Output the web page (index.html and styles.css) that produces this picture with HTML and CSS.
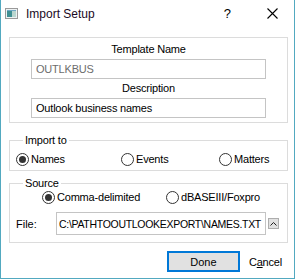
FILE: index.html
```html
<!DOCTYPE html>
<html lang="en">
<head>
    <meta charset="UTF-8">
    <title>Import Setup</title>
    <link rel="stylesheet" href="styles.css">
</head>
<body>
    <div class="window">
        <div class="titlebar">
            <svg class="appIcon" width="13" height="11" viewBox="0 0 13 11">
                <rect x="0.5" y="0.5" width="12" height="10" fill="#eef2f3" stroke="#9a9a9a" />
                <rect x="2" y="2" width="5" height="7" fill="#3f8f93" />
                <rect x="7" y="2" width="4" height="7" fill="#b9d6cf" />
                <rect x="2" y="2" width="9" height="1" fill="#6fa7c6" />
            </svg>
            <span class="title">Import Setup</span>
            <span class="helpButton">?</span>
            <svg class="closeIcon" width="11" height="11" viewBox="0 0 11 11">
                <path d="M0.5 0.5 L10.5 10.5 M10.5 0.5 L0.5 10.5" stroke="#000" stroke-width="1.1" fill="none" />
            </svg>
        </div>

        <div class="dialogBody">
            <!-- Template -->
            <div class="templateBox">
                <div class="fieldLabel">Template Name</div>
                <input type="text" class="textField readOnly" value="OUTLKBUS" readonly>
                <div class="fieldLabel secondLabel">Description</div>
                <input type="text" class="textField" value="Outlook business names">
            </div>

            <!-- Import to -->
            <fieldset class="group importGroup">
                <legend>Import to</legend>
                <div class="radioRow importRow">
                    <label class="radio checked"><span class="radioMark"></span>Names</label>
                    <label class="radio"><span class="radioMark"></span>Events</label>
                    <label class="radio"><span class="radioMark"></span>Matters</label>
                </div>
            </fieldset>

            <!-- Source -->
            <fieldset class="group sourceGroup">
                <legend>Source</legend>
                <div class="radioRow sourceRow">
                    <label class="radio checked"><span class="radioMark"></span>Comma-delimited</label>
                    <label class="radio"><span class="radioMark"></span>dBASEIII/Foxpro</label>
                </div>
                <div class="fileRow">
                    <span class="fileLabel">File:</span>
                    <input type="text" class="textField fileField" value="C:\PATHTOOUTLOOKEXPORT\NAMES.TXT">
                    <span class="browseButton">
                        <svg width="7" height="4" viewBox="0 0 7 4">
                            <path d="M0.5 3.5 L3.5 0.5 L6.5 3.5" stroke="#222" stroke-width="1" fill="none" />
                        </svg>
                    </span>
                </div>
            </fieldset>

            <div class="buttonRow">
                <button class="doneButton">Done</button>
                <span class="cancelButton">C<span class="accessKey">a</span>ncel</span>
            </div>
        </div>
    </div>
</body>
</html>
```

FILE: styles.css
```css
* {
    box-sizing: border-box;
}

body {
    margin: 0;
    font-family: 'Liberation Sans', Arial, sans-serif;
    font-size: 11px;
    color: #000;
    background-color: #fff;
}

.window {
    width: 295px;
    height: 279px;
    background-color: #fff;
    border: 1px solid #52a9c0;
    border-top: none;
}

.titlebar {
    height: 27px;
    display: flex;
    align-items: center;
    padding-left: 4px;
}

.appIcon {
    margin-right: 8px;
}

.title {
    font-size: 12px;
    color: #1a0a24;
    flex: 1;
}

.helpButton {
    font-size: 13px;
    margin-right: 36px;
}

.closeIcon {
    margin-right: 16px;
}

.dialogBody {
    padding: 10px 6px 0 8px;
}

.templateBox {
    border: 1px solid #dcdcdc;
    padding: 4px 0;
    display: flex;
    flex-direction: column;
    align-items: center;
}

.fieldLabel {
    height: 14px;
    line-height: 14px;
    letter-spacing: -0.2px;
    margin-bottom: 3px;
}

.secondLabel {
    margin-top: 2px;
}

.textField {
    display: block;
    width: 235px;
    height: 20px;
    margin: 0;
    padding: 0 4px;
    border: 1px solid #c4c4c4;
    border-radius: 0;
    background-color: #fff;
    font-family: 'Liberation Sans', Arial, sans-serif;
    font-size: 11px;
    letter-spacing: -0.2px;
    color: #000;
    outline: none;
}

.readOnly {
    color: #6d6d6d;
}

.group {
    margin: 10px 0 0;
    padding: 5px 0 4px 6px;
    border: 1px solid #dcdcdc;
    min-width: 0;
}

.group legend {
    margin-left: 7px;
    padding: 0 2px;
    line-height: 14px;
    letter-spacing: -0.2px;
}

.sourceGroup {
    margin-top: 5px;
    padding: 0 0 7px 6px;
}

.radioRow {
    display: grid;
    height: 14px;
    align-items: center;
}

.importRow {
    grid-template-columns: 105px 98px auto;
}

.sourceRow {
    margin-left: 26px;
    grid-template-columns: 124px auto;
}

.radio {
    display: flex;
    align-items: center;
    letter-spacing: -0.2px;
}

.radioMark {
    width: 13px;
    height: 13px;
    border: 1px solid #333;
    border-radius: 50%;
    margin-right: 2px;
    display: flex;
    align-items: center;
    justify-content: center;
}

.checked .radioMark:after {
    content: "";
    width: 7px;
    height: 7px;
    border-radius: 50%;
    background-color: #333;
}

.fileRow {
    display: flex;
    align-items: center;
    margin-top: 8px;
}

.fileLabel {
    width: 40px;
}

.fileField {
    width: 210px;
    height: 23px;
    padding: 0 2px;
    font-size: 10.5px;
    letter-spacing: -0.3px;
}

.browseButton {
    width: 11px;
    height: 11px;
    margin-left: 2px;
    border: 1px solid #adadad;
    background-color: #e1e1e1;
    display: flex;
    align-items: center;
    justify-content: center;
}

.buttonRow {
    display: flex;
    justify-content: flex-end;
    align-items: center;
    margin-top: 8px;
}

.doneButton {
    width: 73px;
    height: 21px;
    margin: 0;
    padding: 0;
    border: 2px solid #0078d7;
    background-color: #e1e1e1;
    font-family: 'Liberation Sans', Arial, sans-serif;
    font-size: 11px;
    color: #000;
}

.cancelButton {
    margin-left: 9px;
    padding-right: 6px;
    letter-spacing: -0.2px;
}

.accessKey {
    text-decoration: underline;
}
```
